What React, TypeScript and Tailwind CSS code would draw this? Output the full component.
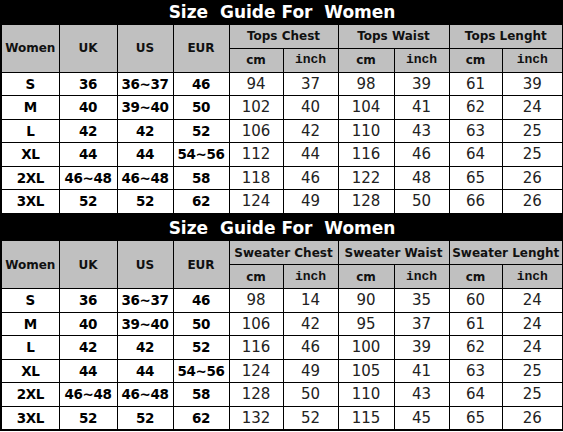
import React from 'react';

type Row = { size: string; uk: string; us: string; eur: string; vals: number[] };

const topsRows: Row[] = [
  { size: 'S', uk: '36', us: '36~37', eur: '46', vals: [94, 37, 98, 39, 61, 39] },
  { size: 'M', uk: '40', us: '39~40', eur: '50', vals: [102, 40, 104, 41, 62, 24] },
  { size: 'L', uk: '42', us: '42', eur: '52', vals: [106, 42, 110, 43, 63, 25] },
  { size: 'XL', uk: '44', us: '44', eur: '54~56', vals: [112, 44, 116, 46, 64, 25] },
  { size: '2XL', uk: '46~48', us: '46~48', eur: '58', vals: [118, 46, 122, 48, 65, 26] },
  { size: '3XL', uk: '52', us: '52', eur: '62', vals: [124, 49, 128, 50, 66, 26] },
];

const sweaterRows: Row[] = [
  { size: 'S', uk: '36', us: '36~37', eur: '46', vals: [98, 14, 90, 35, 60, 24] },
  { size: 'M', uk: '40', us: '39~40', eur: '50', vals: [106, 42, 95, 37, 61, 24] },
  { size: 'L', uk: '42', us: '42', eur: '52', vals: [116, 46, 100, 39, 62, 24] },
  { size: 'XL', uk: '44', us: '44', eur: '54~56', vals: [124, 49, 105, 41, 63, 25] },
  { size: '2XL', uk: '46~48', us: '46~48', eur: '58', vals: [128, 50, 110, 43, 64, 25] },
  { size: '3XL', uk: '52', us: '52', eur: '62', vals: [132, 52, 115, 45, 65, 26] },
];

const colWidths = [58, 58, 56, 56, 54, 55, 56, 55, 53, 61];

const sans = "font-['DejaVu_Sans',sans-serif]";
const mono = "font-['Liberation_Mono',monospace]";

const SizeTable: React.FC<{ groups: string[]; rows: Row[]; titleH: string; rowH: string }> = ({ groups, rows, titleH, rowH }) => {
  const cell = 'border border-black text-center p-0';
  return (
    <table className={`w-[562px] border-collapse border-2 border-black table-fixed ${sans}`}>
      <colgroup>
        {colWidths.map((w, i) => (
          <col key={i} style={{ width: w }} />
        ))}
      </colgroup>
      <tbody>
        <tr className={titleH}>
          <td colSpan={10} className="bg-black text-white text-center font-bold text-[17px] leading-none p-0 whitespace-pre">
            {'Size  Guide For  Women'}
          </td>
        </tr>
        <tr className="h-[24px] bg-[#c0c0c0] text-[12px] font-bold text-[#111]">
          <td rowSpan={2} className={cell}>Women</td>
          <td rowSpan={2} className={cell}>UK</td>
          <td rowSpan={2} className={cell}>US</td>
          <td rowSpan={2} className={cell}>EUR</td>
          {groups.map((g) => (
            <td key={g} colSpan={2} className={`${cell} whitespace-nowrap`}>{g}</td>
          ))}
        </tr>
        <tr className="h-[24px] bg-[#c0c0c0] text-[#111]">
          {groups.map((g) => (
            <React.Fragment key={g}>
              <td className={`${cell} text-[12px] font-bold`}>cm</td>
              <td className={`${cell} ${mono} text-[13px] font-bold`}>inch</td>
            </React.Fragment>
          ))}
        </tr>
        {rows.map((r) => (
          <tr key={r.size} className={`${rowH} bg-white`}>
            <td className={`${cell} font-bold text-[13.5px] tracking-[-0.4px]`}>{r.size}</td>
            <td className={`${cell} font-bold text-[13.5px] tracking-[-0.4px]`}>{r.uk}</td>
            <td className={`${cell} font-bold text-[13.5px] tracking-[-0.4px]`}>{r.us}</td>
            <td className={`${cell} font-bold text-[13.5px] tracking-[-0.4px]`}>{r.eur}</td>
            {r.vals.map((v, i) => (
              <td key={i} className={`${cell} text-[15px] text-[#222]`}>{v}</td>
            ))}
          </tr>
        ))}
      </tbody>
    </table>
  );
};

export default function App() {
  return (
    <div className="w-[563px] h-[432px] bg-white">
      <SizeTable groups={['Tops Chest', 'Tops Waist', 'Tops Lenght']} rows={topsRows} titleH="h-[23px]" rowH="h-[23px]" />
      <SizeTable groups={['Sweater Chest', 'Sweater Waist', 'Sweater Lenght']} rows={sweaterRows} titleH="h-[25px]" rowH="h-[22.5px]" />
    </div>
  );
}
